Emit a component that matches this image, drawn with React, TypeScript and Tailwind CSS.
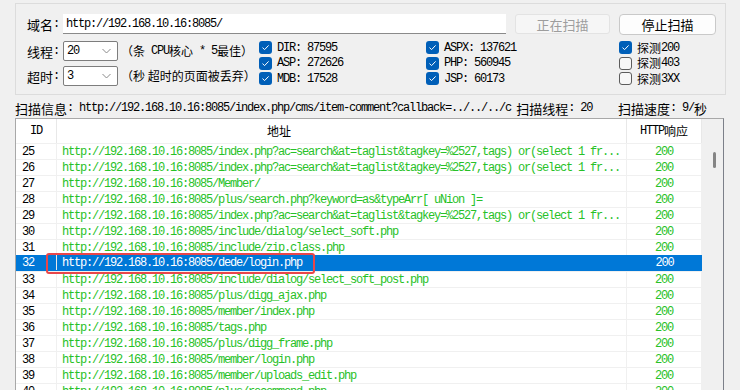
import React from "react";

const M = "font-['Liberation_Mono',monospace] text-[12px] tracking-[-1.2px] whitespace-pre";

function Check({ checked }: { checked: boolean }) {
  if (checked) {
    return (
      <span className="w-[13px] h-[13px] rounded-[3px] bg-[#005fb8] flex items-center justify-center shrink-0">
        <svg width="9" height="7" viewBox="0 0 9 7">
          <polyline points="1.5,3.6 3.6,5.6 7.6,1.4" fill="none" stroke="white" strokeWidth="1" />
        </svg>
      </span>
    );
  }
  return <span className="w-[13px] h-[13px] rounded-[3px] border border-[#5c5c5c] bg-[#f7f7f7] shrink-0" />;
}

function Chevron() {
  return (
    <svg width="9" height="6" viewBox="0 0 9 6">
      <polyline points="0.5,1 4.5,5 8.5,1" fill="none" stroke="#8a8a8a" strokeWidth="1" />
    </svg>
  );
}

function Select({ value }: { value: string }) {
  return (
    <div className="w-[55px] h-[20px] bg-white border border-[#7d7d7d] rounded-[2px] flex items-center justify-between pl-[3px] pr-[6px]">
      <span className={M}>{value}</span>
      <Chevron />
    </div>
  );
}

function CheckItem({ checked, label, cjk }: { checked: boolean; label: string; cjk?: string }) {
  return (
    <div className="h-[15.5px] flex items-center gap-[5px]">
      <Check checked={checked} />
      <span className="flex items-center">
        {cjk ? <span className="text-[12px]">{cjk}</span> : null}
        <span className={M}>{label}</span>
      </span>
    </div>
  );
}

const H = "http://192.168.10.16:8085/";
const rows: { id: number; url: string }[] = [
  { id: 25, url: H + "index.php?ac=search&at=taglist&tagkey=%2527,tags) or(select 1 fr..." },
  { id: 26, url: H + "index.php?ac=search&at=taglist&tagkey=%2527,tags) or(select 1 fr..." },
  { id: 27, url: H + "Member/" },
  { id: 28, url: H + "plus/search.php?keyword=as&typeArr[ uNion ]=" },
  { id: 29, url: H + "index.php?ac=search&at=taglist&tagkey=%2527,tags) or(select 1 fr..." },
  { id: 30, url: H + "include/dialog/select_soft.php" },
  { id: 31, url: H + "include/zip.class.php" },
  { id: 32, url: H + "dede/login.php" },
  { id: 33, url: H + "include/dialog/select_soft_post.php" },
  { id: 34, url: H + "plus/digg_ajax.php" },
  { id: 35, url: H + "member/index.php" },
  { id: 36, url: H + "tags.php" },
  { id: 37, url: H + "plus/digg_frame.php" },
  { id: 38, url: H + "member/login.php" },
  { id: 39, url: H + "member/uploads_edit.php" },
  { id: 40, url: H + "plus/recommend.php" },
];

export default function App() {
  return (
    <div className="relative w-[740px] h-[390px] overflow-hidden bg-[#f0f0f0] text-black font-['Noto_Sans_CJK_SC',sans-serif] text-[12px] leading-none">
      {/* group box */}
      <div className="ml-[15px] mt-[3px] w-[711px] h-[92px] border border-[#dcdcdc] pl-[11px] pt-[10px]">
        <div className="flex items-center h-[20px]">
          <span className="w-[36px] text-[13px] flex items-center">
            域名<span className={M}>:</span>
          </span>
          <div className="w-[443px] h-[20px] bg-white border-b border-[#8a8a8a] flex items-center pl-[3px]">
            <span className={M}>http://192.168.10.16:8085/</span>
          </div>
          <div className="ml-[9px] w-[95px] h-[20px] rounded-[3px] border border-[#e3e3e3] bg-[#f6f6f6] text-[#9d9d9d] text-[13px] flex items-center justify-center">
            正在扫描
          </div>
          <div className="ml-[9px] w-[97px] h-[21px] rounded-[4px] border border-[#c9c9c9] bg-[#fdfdfd] text-[13px] flex items-center justify-center">
            停止扫描
          </div>
        </div>
        <div className="flex mt-[6px]">
          <div className="w-[232px] flex flex-col gap-[5px] pt-[1px]">
            <div className="flex items-center h-[20px]">
              <span className="w-[36px] text-[13px] flex items-center">
                线程<span className={M}>:</span>
              </span>
              <Select value="20" />
              <span className="ml-[3px] flex items-center whitespace-nowrap">
                （条<span className={M}> CPU</span>核心<span className={M}> * 5</span>最佳）
              </span>
            </div>
            <div className="flex items-center h-[20px]">
              <span className="w-[36px] text-[13px] flex items-center">
                超时<span className={M}>:</span>
              </span>
              <Select value="3" />
              <span className="ml-[3px] whitespace-nowrap">（秒 超时的页面被丢弃）</span>
            </div>
          </div>
          <div className="w-[167px] flex flex-col">
            <CheckItem checked label="DIR: 87595" />
            <CheckItem checked label="ASP: 272626" />
            <CheckItem checked label="MDB: 17528" />
          </div>
          <div className="w-[193px] flex flex-col">
            <CheckItem checked label="ASPX: 137621" />
            <CheckItem checked label="PHP: 560945" />
            <CheckItem checked label="JSP: 60173" />
          </div>
          <div className="flex flex-col">
            <CheckItem checked cjk="探测" label="200" />
            <CheckItem checked={false} cjk="探测" label="403" />
            <CheckItem checked={false} cjk="探测" label="3XX" />
          </div>
        </div>
      </div>

      {/* scan info */}
      <div className="mt-[5px] h-[16px] flex items-center pl-[15px] whitespace-nowrap">
        <div className="w-[603px] flex items-center">
          <span className="text-[13px]">扫描信息</span>
          <span className={M}>: </span>
          <span className={M}>http://192.168.10.16:8085/index.php/cms/item-comment?callback=../../../c</span>
          <span className="ml-[5px] text-[13px]">扫描线程</span>
          <span className={M}>: 20</span>
        </div>
        <span className="text-[13px]">扫描速度</span>
        <span className={M}>: 9/</span>
        <span className="text-[13px]">秒</span>
      </div>

      {/* table */}
      <div className="mt-[2px] ml-[15px] w-[709px] h-[300px] border-l border-t border-r border-l-[#a8a8a8] border-t-[#a8a8a8] border-r-[#7c8089] flex">
        <div className="w-[686px] bg-white flex flex-col">
          <div className="h-[24px] flex shrink-0">
            <div className="w-[41px] border-r border-[#e8e8e8] flex items-center justify-center">
              <span className={M}>ID</span>
            </div>
            <div className="w-[570px] border-r border-[#e8e8e8] flex items-center pl-[210px]">
              <span className="text-[12px]">地址</span>
            </div>
            <div className="w-[75px] border-r border-[#e8e8e8] flex items-center justify-center">
              <span className={M}>HTTP</span>
              <span className="text-[12px]">响应</span>
            </div>
          </div>
          {rows.map((r) => {
            const sel = r.id === 32;
            return (
              <div
                key={r.id}
                className={
                  sel
                    ? "h-[16px] flex shrink-0 bg-[#0078d7] text-white border-b border-[#0078d7]"
                    : "h-[16px] flex shrink-0 border-t border-[#f0f0f0] text-[#27c127]"
                }
              >
                <div className={sel ? "w-[41px] border-r border-[#e8e8e8] flex items-center pl-[6px] text-white" : "w-[41px] border-r border-[#f0f0f0] flex items-center pl-[6px] text-black"}>
                  <span className={M}>{r.id}</span>
                </div>
                <div className={sel ? "w-[570px] border-r border-[#0078d7] flex items-center pl-[5px] overflow-hidden whitespace-nowrap" : "w-[570px] border-r border-[#f0f0f0] flex items-center pl-[5px] overflow-hidden whitespace-nowrap"}>
                  <span className={M}>{r.url}</span>
                </div>
                <div className={sel ? "w-[75px] flex items-center justify-center" : "w-[75px] border-r border-[#f0f0f0] flex items-center justify-center"}>
                  <span className={M}>200</span>
                </div>
              </div>
            );
          })}
        </div>
        <div className="w-[21px] bg-[#f0f0f0] relative">
          <div className="absolute left-[11px] top-[33px] w-[3px] h-[16px] rounded-full bg-[#858585]" />
        </div>
      </div>

      {/* annotation */}
      <div className="absolute left-[46px] top-[253px] w-[269px] h-[21px] border-2 border-[#e8464a] rounded-[3px]" />
    </div>
  );
}
